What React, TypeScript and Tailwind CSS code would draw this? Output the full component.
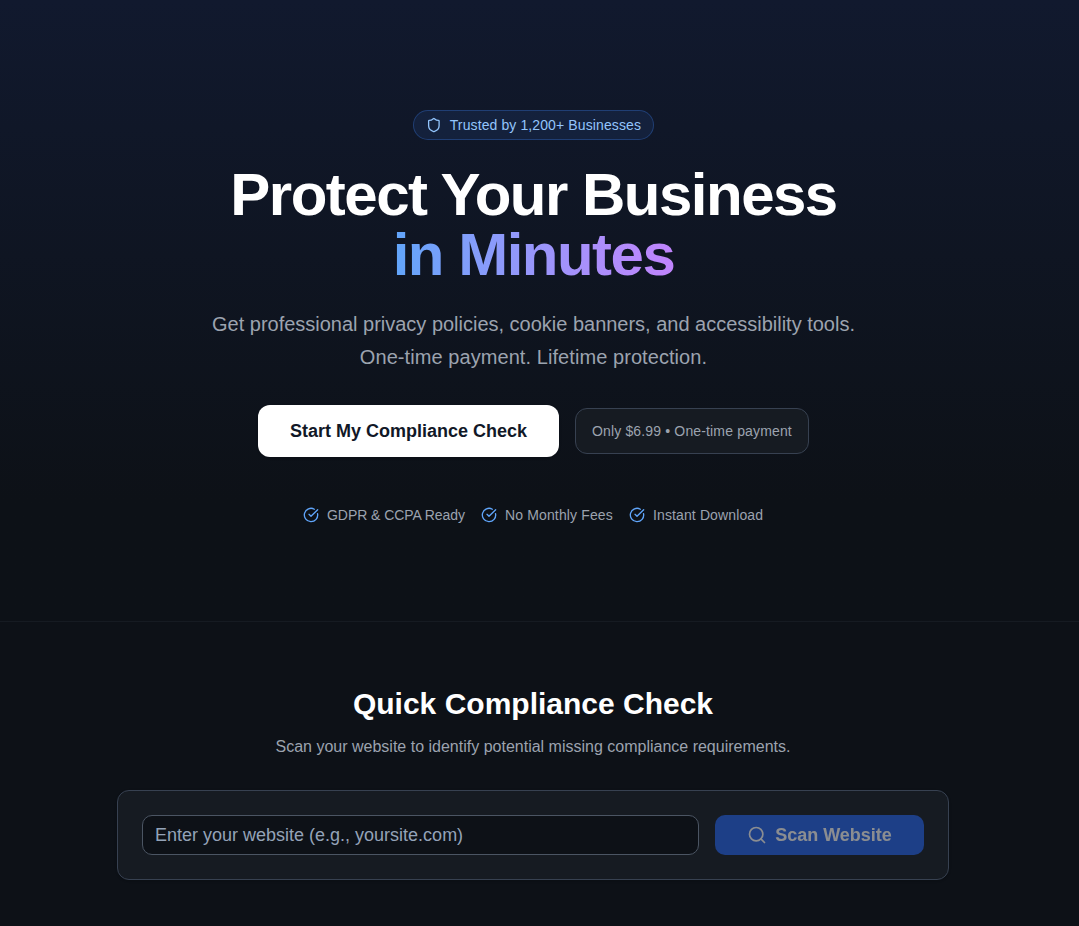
import React, { useState } from 'react';
import { CircleCheckBig, Search, Shield } from 'lucide-react';

const features = [
  { label: 'GDPR & CCPA Ready', tracking: 'w-[138px] tracking-[-0.06px]' },
  { label: 'No Monthly Fees', tracking: 'w-[108px] tracking-[0.14px]' },
  { label: 'Instant Download', tracking: 'w-[111px] tracking-[0.12px]' },
];

const Hero = () => (
  <section className="h-[622px] border-b border-[#161b22] bg-linear-to-b from-[#11192e] to-[#0d1117] to-[500px] pr-3 pt-[110px]">
    <div className="flex flex-col items-center text-center">
      {/* Trust badge */}
      <div className="flex h-[30px] w-[241px] items-center whitespace-nowrap rounded-full border border-[#3b82f6]/30 bg-[#3b82f6]/10 px-3 text-sm tracking-[0.11px] text-[#93c5fd]">
        <Shield className="mr-2 h-4 w-4" />
        Trusted by 1,200+ Businesses
      </div>

      <h1 className="mt-[25px] text-6xl font-bold leading-[60px] tracking-tight text-white">
        Protect Your Business
        <span className="mx-auto block w-fit bg-linear-to-r from-[#60a5fa] to-[#c084fc] bg-clip-text text-transparent">
          in Minutes
        </span>
      </h1>

      <p className="mt-[23px] text-xl leading-[32.5px] text-[#9ca3af]">
        <span className="block tracking-[-0.01px]">
          Get professional privacy policies, cookie banners, and accessibility tools.
        </span>
        <span className="block tracking-[0.07px]">One-time payment. Lifetime protection.</span>
      </p>

      <div className="mt-8 flex items-center gap-4">
        <button className="h-[52px] w-[301px] rounded-xl bg-white text-lg font-semibold text-[#111827] shadow-sm">
          Start My Compliance Check
        </button>
        <div className="flex h-[46px] w-[234px] items-center whitespace-nowrap rounded-xl border border-[#374151] bg-[#161b22] px-4 text-sm tracking-[0.15px] text-[#9ca3af]">
          Only $6.99 • One-time payment
        </div>
      </div>

      <div className="mt-12 flex gap-4 text-left text-sm text-[#9ca3af]">
        {features.map(({ label, tracking }) => (
          <div key={label} className="flex items-center gap-2">
            <CircleCheckBig className="h-4 w-4 text-[#60a5fa]" />
            <span className={`whitespace-nowrap ${tracking}`}>{label}</span>
          </div>
        ))}
      </div>
    </div>
  </section>
);

const Scanner = () => {
  const [url, setUrl] = useState('');

  return (
    <section className="pr-[13px] pt-16">
      <div className="mx-auto w-[832px]">
        <div className="mb-[31px] text-center">
          <h2 className="mb-[13px] text-3xl font-bold text-white">Quick Compliance Check</h2>
          <p className="text-[#9ca3af]">Scan your website to identify potential missing compliance requirements.</p>
        </div>

        <div className="flex h-[90px] gap-4 rounded-xl border border-[#374151] bg-[#161b22] p-6 shadow-sm">
          <input
            type="text"
            value={url}
            onChange={(e) => setUrl(e.target.value)}
            placeholder="Enter your website (e.g., yoursite.com)"
            className="h-10 min-w-0 flex-1 rounded-[10px] border border-[#4b5563] bg-[#0d1117] px-3 text-lg text-white placeholder:text-[#94a3b8]"
          />
          <button
            disabled={!url}
            className="flex h-10 w-[209px] items-center justify-center gap-2 rounded-[10px] bg-[#2563eb] text-lg font-semibold text-white disabled:opacity-50"
          >
            <Search className="h-5 w-5" />
            Scan Website
          </button>
        </div>
      </div>
    </section>
  );
};

export default function App() {
  return (
    <main className="h-[926px] overflow-hidden bg-[#0d1117] font-['Liberation_Sans',sans-serif]">
      <Hero />
      <Scanner />
    </main>
  );
}
